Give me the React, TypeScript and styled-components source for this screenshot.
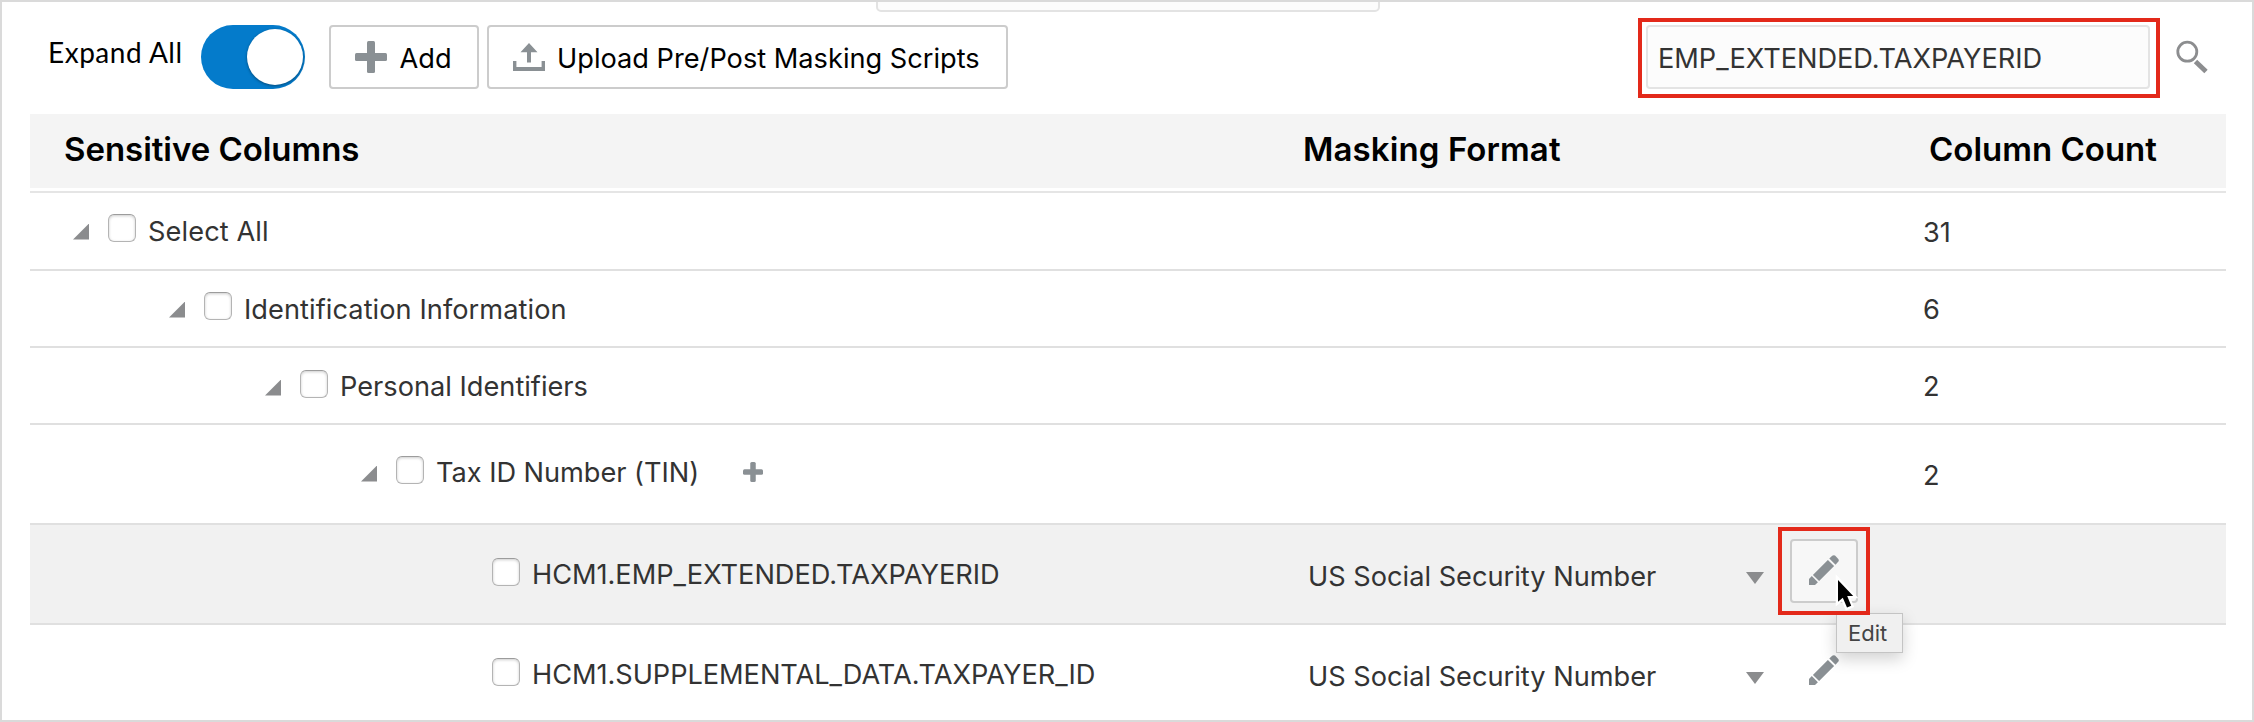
import React from "react";
import styled, { createGlobalStyle } from "styled-components";

const GlobalStyle = createGlobalStyle`
  *, *::before, *::after { box-sizing: border-box; }
  body { margin: 0; background: #fff; }
  button, input { font: inherit; color: inherit; }
`;

const Page = styled.div`
  position: relative;
  width: 2254px;
  height: 722px;
  padding: 0 26px 0 28px;
  overflow: hidden;
  border: 2px solid #dadada;
  background: #fff;
  color: #333;
  font-family: Inter, "Liberation Sans", sans-serif;
  font-size: 27.2px;
  line-height: 34px;
  white-space: nowrap;
`;

/* Lower edge of a field that is scrolled out above the toolbar */
const ScrolledField = styled.div`
  position: absolute;
  top: -20px;
  left: 874px;
  width: 504px;
  height: 30px;
  border: 2px solid #e3e3e3;
  border-radius: 5px;
  background: #fcfcfc;
`;

const Toolbar = styled.div`
  display: flex;
  align-items: flex-start;
  height: 112px;
  padding: 23px 0 0 18px;
  color: #000;
`;

const SwitchLabel = styled.label`
  width: 153px;
  padding-top: 10px;
  font-family: Lato, sans-serif;
  font-size: 28px;
  letter-spacing: 0.52px;
`;

const Switch = styled.button`
  display: flex;
  justify-content: flex-end;
  width: 104px;
  height: 64px;
  margin-right: 24px;
  padding: 4px 2px;
  border: 0;
  border-radius: 32px;
  background: #047bcb;
`;

const Knob = styled.span`
  width: 56px;
  height: 56px;
  border-radius: 50%;
  background: #fff;
  box-shadow: 0 1px 3px rgba(0, 0, 0, 0.4);
`;

const ToolButton = styled.button<{ $width: number; $gap: number }>`
  display: flex;
  align-items: center;
  gap: ${(p) => p.$gap}px;
  width: ${(p) => p.$width}px;
  height: 64px;
  margin-right: 8px;
  padding: 0 0 0 24px;
  border: 2px solid #ccc;
  border-radius: 4px;
  background: #fff;
`;

const ButtonText = styled.span`
  padding-top: 3px;
`;

const SearchHighlight = styled.div`
  width: 522px;
  height: 80px;
  margin: -7px 16px 0 auto;
  padding: 3px 6px 5px 4px;
  border: 4px solid #e3291a;
`;

const SearchInput = styled.input`
  display: block;
  width: 504px;
  height: 64px;
  padding: 2px 0 0 10px;
  border: 2px solid #e4e4e4;
  border-radius: 4px;
  outline: 0;
  background: #fcfcfc;
  color: #333;
  letter-spacing: -0.04px;
`;

const SearchIcon = styled.svg`
  width: 32px;
  height: 34px;
  margin: 15px 18px 0 0;
`;

const HeaderRow = styled.div`
  display: grid;
  grid-template-columns: 1273px 626px 1fr;
  height: 74px;
  margin-bottom: 3px;
  padding-top: 18px;
  background: #f4f4f4;
  color: #000;
  font-size: 33px;
  font-weight: 600;
`;

const HeaderCell = styled.div<{ $indent?: number; $spacing?: number }>`
  padding-left: ${(p) => p.$indent ?? 0}px;
  letter-spacing: ${(p) => p.$spacing ?? 0}px;
`;

const Row = styled.div<{ $height: number; $active?: boolean; $first?: boolean }>`
  display: grid;
  grid-template-columns: 1272px 621px 1fr;
  height: ${(p) => p.$height}px;
  border-top: 2px solid ${(p) => (p.$first ? "#e5e5e5" : "#e0e0e0")};
  background: ${(p) => (p.$active ? "#f1f1f1" : "#fff")};
`;

const TreeCell = styled.div<{ $level: number; $top: number }>`
  display: flex;
  align-items: flex-start;
  padding: ${(p) => p.$top}px 0 0 ${(p) => 43 + p.$level * 96}px;
`;

const Expander = styled.span<{ $leaf: boolean }>`
  width: 16px;
  height: 16px;
  margin: 9.5px 19px 0 0;
  background: ${(p) => (p.$leaf ? "transparent" : "#8b8c8e")};
  clip-path: polygon(100% 0, 100% 100%, 0 100%);
`;

const Checkbox = styled.span`
  width: 28px;
  height: 28px;
  margin-right: 12px;
  border: 1px solid #b4b4b4;
  border-top-color: #9c9c9c;
  border-radius: 6px;
  background: #fff;
  box-shadow: inset 0 1px 3px rgba(0, 0, 0, 0.2);
`;

const NodeLabel = styled.span<{ $spacing?: number; $offset?: number }>`
  padding-top: ${(p) => p.$offset ?? 0}px;
  letter-spacing: ${(p) => p.$spacing ?? 0}px;
`;

const AddChild = styled.span`
  display: flex;
  margin: 6px 0 0 44px;
`;

const FormatCell = styled.div`
  display: flex;
  align-items: flex-start;
  padding-left: 6px;
`;

const FormatName = styled.span`
  width: 438px;
  padding-top: 35px;
`;

const SelectArrow = styled.span`
  width: 18px;
  height: 12px;
  margin: 47px 26px 0 0;
  background: #8b8c8e;
  clip-path: polygon(0 0, 100% 0, 50% 100%);
`;

const EditButton = styled.div<{ $hover?: boolean }>`
  position: relative;
  z-index: ${(p) => (p.$hover ? 2 : 0)};
  width: 68px;
  height: 64px;
  margin-top: 14px;
  padding: 14px 0 0 17px;
  border: 2px solid ${(p) => (p.$hover ? "#ccc" : "transparent")};
  border-radius: 4px;
  background: ${(p) => (p.$hover ? "#f7f7f7" : "transparent")};
`;

const EditHighlight = styled.span`
  position: absolute;
  inset: -14px;
  border: 4px solid #e3291a;
`;

const Tooltip = styled.span`
  position: absolute;
  top: 72px;
  left: 44px;
  width: 67px;
  height: 40px;
  padding: 2px 0 0 11px;
  border: 1px solid #c4c4c4;
  background: #f0f0f0;
  box-shadow: 0 6px 16px rgba(0, 0, 0, 0.18);
  color: #444;
  font-size: 22px;
`;

const Cursor = styled.svg`
  position: absolute;
  top: 32px;
  left: 40px;
  width: 26px;
  height: 42px;
`;

const CountCell = styled.div<{ $top: number }>`
  padding-top: ${(p) => p.$top}px;
`;

const Icon = styled.svg`
  display: block;
  flex: none;
  overflow: visible;
`;

const PlusIcon = ({ size, arm }: { size: number; arm: number }) => (
  <Icon width={size} height={size} fill="#8a9094">
    <rect x={(size - arm) / 2} width={arm} height={size} rx={1.5} />
    <rect y={(size - arm) / 2} width={size} height={arm} rx={1.5} />
  </Icon>
);

const UploadIcon = () => (
  <Icon width="32" height="28" viewBox="0 0 32 28" fill="#8a9094">
    <path d="M16 0 24.5 9.3H18V19.5H14V9.3H7.5Z" />
    <path d="M0 18H3.4V24H28.6V18H32V28H0Z" />
  </Icon>
);

const PencilIcon = () => (
  <Icon width="30" height="30" viewBox="0 0 30 30" fill="#8a9094">
    <path d="M3.9 19.9 18.9 4.9 25.1 11.1 10.1 26.1Z" />
    <path d="M20.3 3.5 23.2.8Q24.6-.4 26 .6L29.3 4Q30.4 5.2 29.4 6.6L26.5 9.7Z" />
    <path d="M0 30V24L2.8 21.1 8.9 27.2 6 30Z" />
  </Icon>
);

type NodeData = {
  label: string;
  level: number;
  height: number;
  top: number;
  offset?: number;
  spacing?: number;
  count?: string;
  countTop?: number;
  addable?: boolean;
  format?: string;
  active?: boolean;
};

const nodes: NodeData[] = [
  { label: "Select All", level: 0, height: 78, top: 21, offset: 1, spacing: 0.1, count: "31", countTop: 23 },
  { label: "Identification Information", level: 1, height: 77, top: 21, offset: 1, spacing: 0.06, count: "6", countTop: 22 },
  { label: "Personal Identifiers", level: 2, height: 77, top: 22, count: "2", countTop: 22 },
  { label: "Tax ID Number (TIN)", level: 3, height: 100, top: 31, spacing: -0.04, count: "2", countTop: 34, addable: true },
  { label: "HCM1.EMP_EXTENDED.TAXPAYERID", level: 4, height: 100, top: 33, spacing: -0.03, format: "US Social Security Number", active: true },
  { label: "HCM1.SUPPLEMENTAL_DATA.TAXPAYER_ID", level: 4, height: 97, top: 33, spacing: -0.05, format: "US Social Security Number" },
];

const TreeRow = ({ node, first }: { node: NodeData; first: boolean }) => (
  <Row $height={node.height} $active={node.active} $first={first}>
    <TreeCell $level={node.level} $top={node.top}>
      <Expander $leaf={!!node.format} />
      <Checkbox role="checkbox" aria-checked={false} />
      <NodeLabel $spacing={node.spacing} $offset={node.offset}>
        {node.label}
      </NodeLabel>
      {node.addable && (
        <AddChild>
          <PlusIcon size={20} arm={5.5} />
        </AddChild>
      )}
    </TreeCell>
    <FormatCell>
      {node.format && (
        <>
          <FormatName>{node.format}</FormatName>
          <SelectArrow />
          <EditButton $hover={node.active}>
            <PencilIcon />
            {node.active && (
              <>
                <Tooltip>Edit</Tooltip>
                <EditHighlight />
                <Cursor viewBox="0 0 26 42">
                  <path
                    d="M6 7V28.8L10.8 24.8 15 34.6 19.2 32.8 15.2 23H21.2Z"
                    fill="#000"
                    stroke="#fff"
                    strokeWidth="4.5"
                    paintOrder="stroke"
                  />
                </Cursor>
              </>
            )}
          </EditButton>
        </>
      )}
    </FormatCell>
    <CountCell $top={node.countTop ?? 0}>{node.count}</CountCell>
  </Row>
);

export default function App() {
  return (
    <>
      <GlobalStyle />
      <Page>
        <ScrolledField />
        <Toolbar>
          <SwitchLabel>Expand All</SwitchLabel>
          <Switch aria-label="Expand All">
            <Knob />
          </Switch>
          <ToolButton $width={150} $gap={12.5}>
            <PlusIcon size={32} arm={8} />
            <ButtonText>Add</ButtonText>
          </ToolButton>
          <ToolButton $width={521} $gap={12}>
            <UploadIcon />
            <ButtonText>Upload Pre/Post Masking Scripts</ButtonText>
          </ToolButton>
          <SearchHighlight>
            <SearchInput defaultValue="EMP_EXTENDED.TAXPAYERID" />
          </SearchHighlight>
          <SearchIcon viewBox="0 0 32 34" fill="none" stroke="#8c8d8f">
            <circle cx="11.3" cy="11.7" r="9.5" strokeWidth="2.8" />
            <path d="M19.5 21.5 30 31.5" strokeWidth="4.8" />
          </SearchIcon>
        </Toolbar>
        <HeaderRow>
          <HeaderCell $indent={34} $spacing={-0.04}>Sensitive Columns</HeaderCell>
          <HeaderCell $spacing={0.1}>Masking Format</HeaderCell>
          <HeaderCell>Column Count</HeaderCell>
        </HeaderRow>
        {nodes.map((node, i) => (
          <TreeRow key={node.label} node={node} first={i === 0} />
        ))}
      </Page>
    </>
  );
}
